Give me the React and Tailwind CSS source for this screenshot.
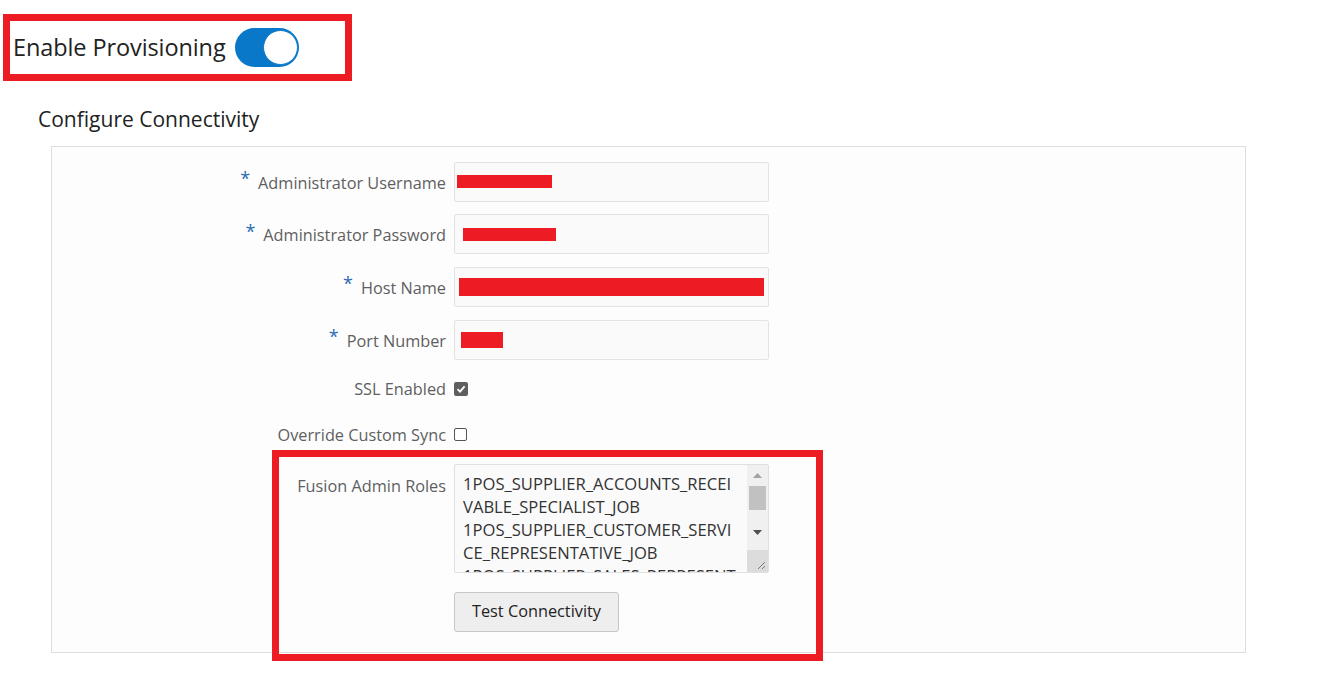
import React from 'react';

const font = "font-['Open_Sans','Noto_Sans',sans-serif]";

function Required() {
    return <span className="text-[18px] text-[#2a6cb5] leading-none relative -top-[5px] mr-[8px]">*</span>;
}

function Label({ required, children, pad = 'pt-[3px]' }) {
    return (
        <div className={`flex items-center justify-end pr-[8px] ${pad} text-[16.3px] text-[#5f5f5f]`}>
            {required && <Required />}
            <span>{children}</span>
        </div>
    );
}

function Field({ label, redact }) {
    return (
        <>
            <Label required>{label}</Label>
            <div className="h-[40px] w-[315px] bg-[#fafafa] border border-[#e3e3e3] rounded-[2px] flex items-center">
                <div className={redact}></div>
            </div>
        </>
    );
}

function Checkbox({ checked }) {
    if (checked) {
        return (
            <div className="w-[14px] h-[14px] rounded-[2px] bg-[#5f5f5f] flex items-center justify-center">
                <svg width="10" height="10" viewBox="0 0 10 10">
                    <path d="M1.5 5.2 L4 7.6 L8.6 2.4" stroke="#fff" strokeWidth="1.8" fill="none" />
                </svg>
            </div>
        );
    }
    return <div className="w-[13px] h-[13px] rounded-[2px] border border-[#555] bg-white"></div>;
}

const roles = [
    '1POS_SUPPLIER_ACCOUNTS_RECEI',
    'VABLE_SPECIALIST_JOB',
    '1POS_SUPPLIER_CUSTOMER_SERVI',
    'CE_REPRESENTATIVE_JOB',
    '1POS_SUPPLIER_SALES_REPRESENT',
];

function App() {
    return (
        <div className={`min-h-screen bg-white ${font} relative`}>
            {/* header */}
            <div className="pt-[14px] pl-[3px]">
                <div className="w-[349px] h-[67px] border-[7px] border-[#ed1c24] flex items-center pl-[3px]">
                    <span className="text-[23.5px] text-[#222] tracking-[-0.1px]">Enable Provisioning</span>
                    <div className="ml-[9px] w-[64px] h-[39px] rounded-full bg-[#0a78c8] flex items-center justify-end p-[1px]">
                        <div className="w-[35px] h-[35px] rounded-full bg-white border border-[#0a78c8]"></div>
                    </div>
                </div>
            </div>

            <div className="pl-[38px] mt-[23px] text-[21px] text-[#222]">Configure Connectivity</div>

            {/* panel */}
            <div className="ml-[51px] mt-[10px] w-[1195px] h-[507px] border border-[#dedede] bg-[#fdfdfd] pt-[15px]">
                <div className="grid grid-cols-[402px_315px] gap-y-[12.7px]">
                    <Field label="Administrator Username" redact="ml-[2px] w-[95px] h-[13px] bg-[#ed1c24]" />
                    <Field label="Administrator Password" redact="ml-[8px] w-[93px] h-[13px] bg-[#ed1c24]" />
                    <Field label="Host Name" redact="ml-[4px] w-[305px] h-[18px] bg-[#ed1c24]" />
                    <Field label="Port Number" redact="ml-[6px] w-[42px] h-[16px] bg-[#ed1c24]" />
                </div>

                <div className="grid grid-cols-[402px_315px] mt-[17px] h-[24px] items-center">
                    <Label pad="pt-[0px]">SSL Enabled</Label>
                    <Checkbox checked />
                </div>
                <div className="grid grid-cols-[402px_315px] mt-[22px] h-[24px] items-center">
                    <Label pad="pt-[0px]">Override Custom Sync</Label>
                    <Checkbox />
                </div>

                <div className="grid grid-cols-[402px_315px] mt-[17px]">
                    <div className="flex justify-end pr-[8px] pt-[10px] text-[16.3px] text-[#5f5f5f]">Fusion Admin Roles</div>
                    <div className="h-[109px] w-[315px] bg-[#fafafa] border border-[#e0e0e0] rounded-[2px] flex overflow-hidden">
                        <div className="flex-1 pl-[8px] pt-[7px] text-[16.6px] leading-[23px] text-[#333] whitespace-nowrap overflow-hidden">
                            {roles.map((r) => <div key={r}>{r}</div>)}
                        </div>
                        <div className="w-[21px] bg-[#f0f0f0] flex flex-col items-center">
                            <div className="h-[21px] flex items-center justify-center">
                                <svg width="9" height="5" viewBox="0 0 9 5"><path d="M0 5 L4.5 0 L9 5 Z" fill="#a3a3a3" /></svg>
                            </div>
                            <div className="w-[17px] h-[24px] bg-[#c1c1c1]"></div>
                            <div className="flex-1 flex items-center justify-center pt-[6px]">
                                <svg width="9" height="5" viewBox="0 0 9 5"><path d="M0 0 L9 0 L4.5 5 Z" fill="#505050" /></svg>
                            </div>
                            <div className="w-[21px] h-[22px] bg-[#dcdcdc] flex items-end justify-end p-[2px]">
                                <svg width="10" height="10" viewBox="0 0 10 10">
                                    <path d="M9 2 L2 9 M9 6 L6 9" stroke="#777" strokeWidth="1" />
                                </svg>
                            </div>
                        </div>
                    </div>
                </div>

                <div className="grid grid-cols-[402px_315px] mt-[19px]">
                    <div></div>
                    <div>
                        <button className="h-[40px] px-[17px] bg-[#eeeeee] border border-[#c6c6c6] rounded-[3px] text-[16.3px] text-[#222]">
                            Test Connectivity
                        </button>
                    </div>
                </div>
            </div>

            {/* annotation box */}
            <div className="absolute left-[272px] top-[450px] w-[551px] h-[211px] border-[7px] border-[#ed1c24]"></div>
        </div>
    );
}

export default App;
